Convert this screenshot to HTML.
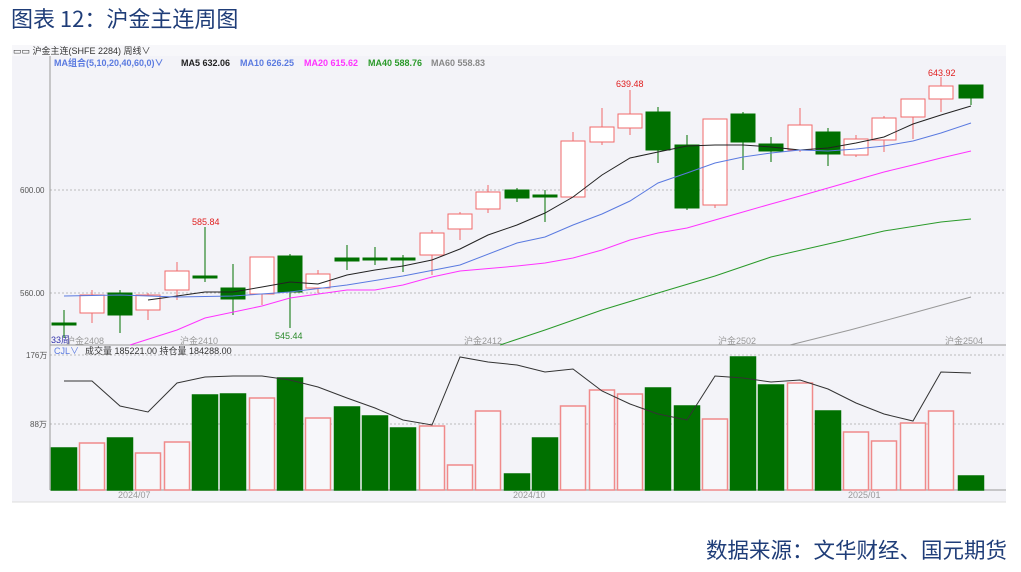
<!DOCTYPE html>
<html><head><meta charset="utf-8"><style>
body{margin:0;width:1021px;height:572px;background:#fff;overflow:hidden;font-family:"Liberation Sans","Noto Sans CJK SC",sans-serif;}
.t{position:absolute;left:11px;top:2px;font-size:22px;color:#1f3d78;font-family:"Noto Sans CJK SC",sans-serif;}
.f{position:absolute;right:14px;top:534px;font-size:21.5px;color:#1f3d78;font-family:"Noto Sans CJK SC",sans-serif;}
svg{position:absolute;left:0;top:0}
</style></head><body>
<div class="t">图表 12：沪金主连周图</div>
<div class="f">数据来源：文华财经、国元期货</div>
<svg width="1021" height="572" id="s" font-family="Liberation Sans, Noto Sans CJK SC, sans-serif">
<rect x="12" y="45" width="994" height="457" fill="#f3f3f8"/>
<line x1="12" y1="502" x2="1006" y2="502" stroke="#ddd"/>
<rect x="12" y="45" width="994" height="11" fill="#f7f7fa"/>
<g stroke="#bbb" stroke-dasharray="2,2">
<line x1="50" y1="190" x2="1006" y2="190"/><line x1="50" y1="293" x2="1006" y2="293"/>
<line x1="50" y1="355" x2="1006" y2="355"/><line x1="50" y1="424" x2="1006" y2="424"/>
</g>
<line x1="50" y1="56" x2="50" y2="490" stroke="#999"/>
<line x1="50" y1="490" x2="1006" y2="490" stroke="#999"/>
<line x1="50" y1="345" x2="1006" y2="345" stroke="#999"/>
<g font-size="9" fill="#333">
<text x="13" y="54" font-size="9">▭▭ 沪金主连(SHFE 2284)   周线∨</text>
<g font-weight="600">
<text x="54" y="66" fill="#5a7ae0">MA组合(5,10,20,40,60,0)∨</text>
<text x="181" y="66" fill="#222">MA5 632.06</text>
<text x="240" y="66" fill="#5a7ae0">MA10 626.25</text>
<text x="304" y="66" fill="#ff33ff">MA20 615.62</text>
<text x="368" y="66" fill="#2a9a2a">MA40 588.76</text>
<text x="431" y="66" fill="#888">MA60 558.83</text>
</g>
<text x="20" y="193" fill="#555" font-size="8">600.00</text>
<text x="20" y="296" fill="#555" font-size="8">560.00</text>
<text x="26" y="358" fill="#555" font-size="8">176万</text>
<text x="30" y="427" fill="#555" font-size="8">88万</text>
<text x="54" y="354" fill="#5a7ae0">CJL∨</text>
<text x="85" y="354">成交量 185221.00  持仓量 184288.00</text>
<text x="51" y="343" fill="#3333aa">33周</text>
<g fill="#999"><text x="66" y="344">沪金2408</text><text x="180" y="344">沪金2410</text><text x="464" y="344">沪金2412</text><text x="718" y="344">沪金2502</text><text x="945" y="344">沪金2504</text>
<text x="118" y="498">2024/07</text><text x="513" y="498">2024/10</text><text x="848" y="498">2025/01</text></g>
<g fill="#e02020"><text x="192" y="225">585.84</text><text x="616" y="87">639.48</text><text x="928" y="76">643.92</text></g>
<text x="275" y="339" fill="#2a8a2a">545.44</text>
</g>
<g id="c"></g>
</svg>
<script>
var C=[[64,323,323,310,338,0],[92,295,313,290,323,1],[120,293,315,290,333,0],[148,295,310,293,320,1],[177,271,290,262,300,1],[205,276,276,227,282,0],[233,288,299,264,315,0],[262,257,294,257,305,1],[290,256,292,254,328,0],[318,274,288,270,293,1],[347,258,261,245,270,0],[375,258,258,247,265,0],[403,258,258,255,272,0],[432,233,255,230,275,1],[460,214,229,212,240,1],[488,192,209,185,213,1],[517,190,198,188,202,0],[545,195,195,190,222,0],[573,141,197,132,197,1],[602,127,142,108,145,1],[630,114,128,90,135,1],[658,112,150,107,163,0],[687,145,208,135,210,0],[715,119,205,119,208,1],[743,114,142,112,170,0],[771,144,151,137,162,0],[800,125,150,108,152,1],[828,132,154,128,166,0],[856,139,155,135,157,1],[884,118,140,116,152,1],[913,99,117,99,139,1],[941,86,99,77,112,1],[971,85,98,85,105,0]];
var V=[448,443,438,453,442,395,394,398,378,418,407,416,428,426,465,411,474,438,406,390,394,388,406,419,357,385,383,411,432,441,423,411,476];
var h='';
C.forEach(function(c,i){var x=c[0],r=c[5],col=r?'#f06a6a':'#007000';
h+='<line x1="'+x+'" y1="'+c[3]+'" x2="'+x+'" y2="'+c[4]+'" stroke="'+col+'"/>';
var hh=Math.max(c[2]-c[1],2);
h+='<rect x="'+(x-12)+'" y="'+c[1]+'" width="24" height="'+hh+'" fill="'+(r?'#fff':'#007000')+'" stroke="'+col+'"/>';
h+='<rect x="'+(x-12.5)+'" y="'+V[i]+'" width="25" height="'+(490-V[i])+'" fill="'+(r?'#f7f7fa':'#007000')+'" stroke="'+(r?'#f08a8a':'#007000')+'" stroke-width="1.5"/>';});
function pl(p,col){return '<polyline fill="none" stroke="'+col+'" stroke-width="1" points="'+p+'"/>';}
h+=pl('148,300 177,296 205,292 233,292 262,287 290,282 318,284 347,275 375,270 403,266 432,260 460,249 488,235 517,225 545,213 573,197 602,175 630,158 658,152 687,146 715,145 743,145 771,147 800,150 828,148 856,143 884,137 913,124 941,115 971,106','#222');
h+=pl('64,296 120,295 177,297 233,296 290,292 347,285 403,276 460,265 517,243 545,237 573,225 602,214 630,201 658,183 687,173 715,163 743,157 771,153 800,150 828,151 856,149 884,146 913,141 941,133 971,123','#5a7ae0');
h+=pl('130,345 177,330 205,318 262,306 290,298 347,290 375,290 403,285 432,277 460,271 517,266 545,263 573,258 602,250 630,240 658,233 687,228 715,220 743,212 771,204 800,196 828,188 856,180 884,172 913,165 941,158 971,151','#ff33ff');
h+=pl('500,345 545,330 602,310 658,293 715,276 771,257 828,244 884,231 941,222 971,219','#2a9a2a');
h+=pl('790,345 850,330 913,313 971,297','#999');
h+=pl('64,381 92,381 120,406 148,412 177,383 205,377 233,376 262,376 290,380 318,387 347,398 375,408 403,420 432,425 460,357 488,362 517,365 545,372 573,369 602,391 630,404 658,414 687,420 715,376 743,378 771,382 800,380 828,389 856,403 884,414 913,421 941,372 971,373','#333');
document.getElementById('c').innerHTML=h;
</script>
</body></html>
